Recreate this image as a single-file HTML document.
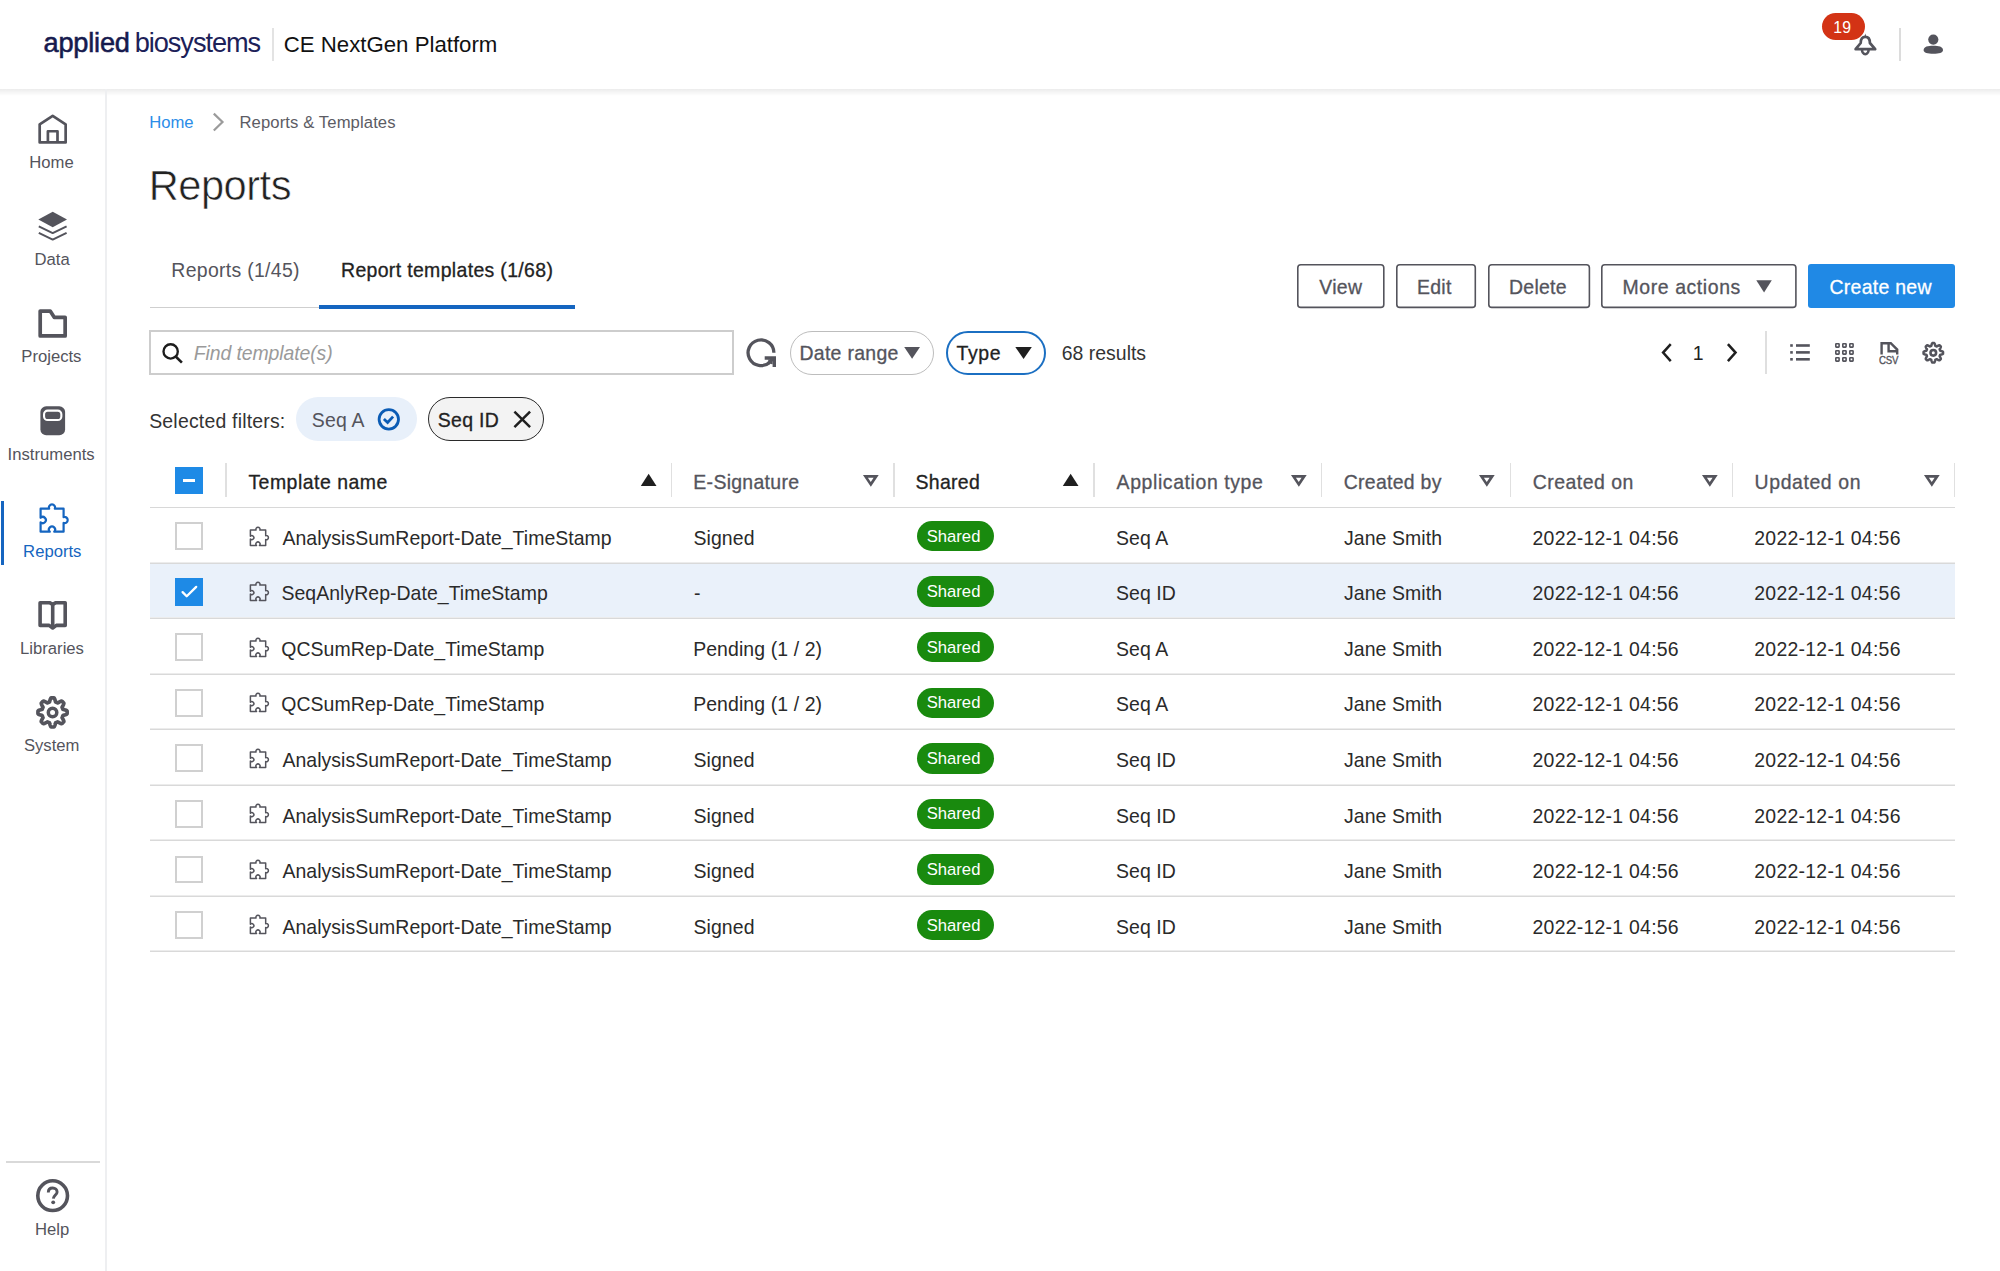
<!DOCTYPE html>
<html><head><meta charset="utf-8"><title>Reports</title>
<style>
html,body{margin:0;padding:0;background:#fff;}
body{width:2000px;height:1271px;position:relative;overflow:hidden;font-family:"Liberation Sans",sans-serif;}
.t{position:absolute;white-space:nowrap;line-height:1;}
.b{position:absolute;box-sizing:border-box;}
svg.b{overflow:visible;}

</style></head><body>

<div class="b" style="left:0.00px;top:89.00px;width:2000.00px;height:7.00px;background:linear-gradient(rgba(0,0,0,0.075),rgba(0,0,0,0));"></div>
<div id="logo1" class="t" style="left:43.51px;top:29px;font-size:27.2px;color:#161a4e;font-weight:400;letter-spacing:-0.2px;-webkit-text-stroke:0.55px #161a4e;">applied</div>
<div id="logo2" class="t" style="left:134.68px;top:29px;font-size:27.2px;color:#1c2158;font-weight:400;letter-spacing:-1.05px;">biosystems</div>
<div class="b" style="left:272.00px;top:28.00px;width:2.00px;height:33.00px;background:#e3e3e3;"></div>
<div id="app" class="t" style="left:283.74px;top:34px;font-size:22.222px;color:#111;font-weight:400;">CE NextGen Platform</div>
<div class="b" style="left:1822.20px;top:12.50px;width:43.10px;height:27.70px;background:#d33315;border-radius:14px;"></div>
<div id="badge" class="t" style="left:1833.35px;top:20px;font-size:15.8px;color:#fff;font-weight:400;">19</div>
<svg class="b" style="left:1852.00px;top:31.00px" width="27" height="27" viewBox="0 0 27 27"><path d="M8.7 12 C8.7 7.6 10.4 5.9 13.3 5.9 C16.2 5.9 17.9 7.6 17.9 12 L23.2 18.2 H3.6 Z" fill="none" stroke="#54545c" stroke-width="2.7" stroke-linejoin="round"/><path d="M12.2 6.2 L13.3 2.6 L14.4 6.2 Z" fill="#54545c"/><path d="M10.0 18.6 A3.3 4.6 0 0 0 16.6 18.6" fill="none" stroke="#54545c" stroke-width="2.6"/></svg>
<div class="b" style="left:1899.00px;top:28.00px;width:1.50px;height:33.00px;background:#dcdcdc;"></div>
<svg class="b" style="left:1923.00px;top:34.00px" width="21" height="21" viewBox="0 0 21 21"><circle cx="10.3" cy="5.6" r="5.1" fill="#54545c"/><path d="M0.6 16.2 C0.6 12.6 5 11.8 10.3 11.8 C15.6 11.8 20 12.6 20 16.2 C20 18.7 16 19.7 10.3 19.7 C4.6 19.7 0.6 18.7 0.6 16.2 Z" fill="#54545c"/></svg>
<div class="b" style="left:105.00px;top:89.00px;width:2.00px;height:1182.00px;background:#eeeff1;"></div>
<svg class="b" style="left:34.00px;top:110.00px" width="38" height="38" viewBox="0 0 38 38"><path d="M5.68 32.45 V14.3 L18.7 5.9 L31.65 14.3 V32.45 Z" fill="none" stroke="#54545c" stroke-width="2.7" stroke-linejoin="round"/><path d="M13.9 32.45 V21.25 H23.5 V32.45" fill="none" stroke="#54545c" stroke-width="2.7" stroke-linejoin="round"/></svg>
<div id="sb_home" class="t" style="left:29.25px;top:155px;font-size:16.667px;color:#54545c;font-weight:400;">Home</div>
<svg class="b" style="left:34.00px;top:206.00px" width="38" height="38" viewBox="0 0 38 38"><path d="M18.7 5.83 L33.0 13.45 L18.7 21.2 L4.33 13.45 Z" fill="#54545c"/><path d="M4.8 20.4 L18.7 27.1 L32.6 20.4" fill="none" stroke="#54545c" stroke-width="2.0" stroke-linejoin="round"/><path d="M4.8 26.9 L18.7 33.6 L32.6 26.9" fill="none" stroke="#54545c" stroke-width="2.0" stroke-linejoin="round"/></svg>
<div id="sb_data" class="t" style="left:34.58px;top:252px;font-size:16.667px;color:#54545c;font-weight:400;">Data</div>
<svg class="b" style="left:34.00px;top:304.00px" width="38" height="38" viewBox="0 0 38 38"><path d="M6.2 7.1 H16.2 L20.2 13.3 H31.15 V31.9 H6.2 Z" fill="none" stroke="#54545c" stroke-width="3.7" stroke-linejoin="round"/></svg>
<div id="sb_proj" class="t" style="left:21.28px;top:349px;font-size:16.667px;color:#54545c;font-weight:400;">Projects</div>
<svg class="b" style="left:34.00px;top:402.00px" width="38" height="38" viewBox="0 0 38 38"><rect x="6.4" y="4.2" width="24.7" height="29" rx="5.8" fill="#54545c"/><rect x="10.05" y="8.65" width="17.3" height="9.4" rx="3.6" fill="none" stroke="#fff" stroke-width="2.1"/></svg>
<div id="sb_inst" class="t" style="left:7.61px;top:447px;font-size:16.667px;color:#54545c;font-weight:400;">Instruments</div>
<div class="b" style="left:0.80px;top:501.30px;width:2.80px;height:63.70px;background:#1565c0;"></div>
<svg class="b" style="left:34.00px;top:498.00px" width="40" height="40" viewBox="0 0 40 40"><path d="M6.6 10.7 H15.17 A3.07 3.07 0 1 1 20.83 10.7 H29.6 V19.14 A3.07 3.07 0 1 1 29.6 24.92 V33.7 H20.21 A3.07 3.07 0 1 0 15.79 33.7 H6.6 V24.24 A3.07 3.07 0 1 0 6.6 19.82 Z" fill="none" stroke="#1565c0" stroke-width="2.2" stroke-linejoin="round"/></svg>
<div id="sb_rep" class="t" style="left:23.12px;top:544px;font-size:16.667px;color:#1565c0;font-weight:400;">Reports</div>
<svg class="b" style="left:34.00px;top:596.00px" width="38" height="38" viewBox="0 0 38 38"><path d="M6.1 6.7 H15.5 L18.7 8.4 L21.9 6.7 H31.2 V29.4 H22.3 L18.7 32 L15.1 29.4 H6.1 Z" fill="none" stroke="#54545c" stroke-width="3.6" stroke-linejoin="round"/><path d="M18.7 8.4 V31" stroke="#54545c" stroke-width="3.6"/></svg>
<div id="sb_lib" class="t" style="left:20.06px;top:641px;font-size:16.667px;color:#54545c;font-weight:400;">Libraries</div>
<svg class="b" style="left:36.00px;top:696.00px" width="34" height="34" viewBox="0 0 34 34"><path d="M16.55 1.80 L16.84 1.80 L17.12 1.81 L17.41 1.83 L17.70 1.85 L17.98 1.87 L18.24 2.12 L18.47 2.54 L18.67 2.99 L18.86 3.46 L19.03 3.94 L19.18 4.43 L19.31 4.91 L19.43 5.36 L19.54 5.79 L19.69 6.07 L19.89 6.13 L20.09 6.20 L20.29 6.27 L20.49 6.34 L20.68 6.42 L20.88 6.51 L21.07 6.59 L21.26 6.68 L21.45 6.78 L21.64 6.88 L21.94 6.78 L22.32 6.56 L22.73 6.32 L23.16 6.08 L23.61 5.84 L24.07 5.62 L24.53 5.41 L25.00 5.24 L25.45 5.11 L25.81 5.11 L26.03 5.30 L26.25 5.49 L26.46 5.68 L26.67 5.88 L26.87 6.08 L27.07 6.28 L27.27 6.49 L27.46 6.70 L27.65 6.92 L27.84 7.14 L27.84 7.50 L27.71 7.95 L27.54 8.42 L27.33 8.88 L27.11 9.34 L26.87 9.79 L26.63 10.22 L26.39 10.63 L26.17 11.01 L26.07 11.31 L26.17 11.50 L26.27 11.69 L26.36 11.88 L26.44 12.07 L26.53 12.27 L26.61 12.46 L26.68 12.66 L26.75 12.86 L26.82 13.06 L26.88 13.26 L27.16 13.41 L27.59 13.52 L28.04 13.64 L28.52 13.77 L29.01 13.92 L29.49 14.09 L29.96 14.28 L30.41 14.48 L30.83 14.71 L31.08 14.97 L31.10 15.25 L31.12 15.54 L31.14 15.83 L31.15 16.11 L31.15 16.40 L31.15 16.69 L31.14 16.97 L31.12 17.26 L31.10 17.55 L31.08 17.83 L30.83 18.09 L30.41 18.32 L29.96 18.52 L29.49 18.71 L29.01 18.88 L28.52 19.03 L28.04 19.16 L27.59 19.28 L27.16 19.39 L26.88 19.54 L26.82 19.74 L26.75 19.94 L26.68 20.14 L26.61 20.34 L26.53 20.53 L26.44 20.73 L26.36 20.92 L26.27 21.11 L26.17 21.30 L26.07 21.49 L26.17 21.79 L26.39 22.17 L26.63 22.58 L26.87 23.01 L27.11 23.46 L27.33 23.92 L27.54 24.38 L27.71 24.85 L27.84 25.30 L27.84 25.66 L27.65 25.88 L27.46 26.10 L27.27 26.31 L27.07 26.52 L26.87 26.72 L26.67 26.92 L26.46 27.12 L26.25 27.31 L26.03 27.50 L25.81 27.69 L25.45 27.69 L25.00 27.56 L24.53 27.39 L24.07 27.18 L23.61 26.96 L23.16 26.72 L22.73 26.48 L22.32 26.24 L21.94 26.02 L21.64 25.92 L21.45 26.02 L21.26 26.12 L21.07 26.21 L20.88 26.29 L20.68 26.38 L20.49 26.46 L20.29 26.53 L20.09 26.60 L19.89 26.67 L19.69 26.73 L19.54 27.01 L19.43 27.44 L19.31 27.89 L19.18 28.37 L19.03 28.86 L18.86 29.34 L18.67 29.81 L18.47 30.26 L18.24 30.68 L17.98 30.93 L17.70 30.95 L17.41 30.97 L17.12 30.99 L16.84 31.00 L16.55 31.00 L16.26 31.00 L15.98 30.99 L15.69 30.97 L15.40 30.95 L15.12 30.93 L14.86 30.68 L14.63 30.26 L14.43 29.81 L14.24 29.34 L14.07 28.86 L13.92 28.37 L13.79 27.89 L13.67 27.44 L13.56 27.01 L13.41 26.73 L13.21 26.67 L13.01 26.60 L12.81 26.53 L12.61 26.46 L12.42 26.38 L12.22 26.29 L12.03 26.21 L11.84 26.12 L11.65 26.02 L11.46 25.92 L11.16 26.02 L10.78 26.24 L10.37 26.48 L9.94 26.72 L9.49 26.96 L9.03 27.18 L8.57 27.39 L8.10 27.56 L7.65 27.69 L7.29 27.69 L7.07 27.50 L6.85 27.31 L6.64 27.12 L6.43 26.92 L6.23 26.72 L6.03 26.52 L5.83 26.31 L5.64 26.10 L5.45 25.88 L5.26 25.66 L5.26 25.30 L5.39 24.85 L5.56 24.38 L5.77 23.92 L5.99 23.46 L6.23 23.01 L6.47 22.58 L6.71 22.17 L6.93 21.79 L7.03 21.49 L6.93 21.30 L6.83 21.11 L6.74 20.92 L6.66 20.73 L6.57 20.53 L6.49 20.34 L6.42 20.14 L6.35 19.94 L6.28 19.74 L6.22 19.54 L5.94 19.39 L5.51 19.28 L5.06 19.16 L4.58 19.03 L4.09 18.88 L3.61 18.71 L3.14 18.52 L2.69 18.32 L2.27 18.09 L2.02 17.83 L2.00 17.55 L1.98 17.26 L1.96 16.97 L1.95 16.69 L1.95 16.40 L1.95 16.11 L1.96 15.83 L1.98 15.54 L2.00 15.25 L2.02 14.97 L2.27 14.71 L2.69 14.48 L3.14 14.28 L3.61 14.09 L4.09 13.92 L4.58 13.77 L5.06 13.64 L5.51 13.52 L5.94 13.41 L6.22 13.26 L6.28 13.06 L6.35 12.86 L6.42 12.66 L6.49 12.46 L6.57 12.27 L6.66 12.07 L6.74 11.88 L6.83 11.69 L6.93 11.50 L7.03 11.31 L6.93 11.01 L6.71 10.63 L6.47 10.22 L6.23 9.79 L5.99 9.34 L5.77 8.88 L5.56 8.42 L5.39 7.95 L5.26 7.50 L5.26 7.14 L5.45 6.92 L5.64 6.70 L5.83 6.49 L6.03 6.28 L6.23 6.08 L6.43 5.88 L6.64 5.68 L6.85 5.49 L7.07 5.30 L7.29 5.11 L7.65 5.11 L8.10 5.24 L8.57 5.41 L9.03 5.62 L9.49 5.84 L9.94 6.08 L10.37 6.32 L10.78 6.56 L11.16 6.78 L11.46 6.88 L11.65 6.78 L11.84 6.68 L12.03 6.59 L12.22 6.51 L12.42 6.42 L12.61 6.34 L12.81 6.27 L13.01 6.20 L13.21 6.13 L13.41 6.07 L13.56 5.79 L13.67 5.36 L13.79 4.91 L13.92 4.43 L14.07 3.94 L14.24 3.46 L14.43 2.99 L14.63 2.54 L14.86 2.12 L15.12 1.87 L15.40 1.85 L15.69 1.83 L15.98 1.81 L16.26 1.80 Z" fill="none" stroke="#54545c" stroke-width="3.7" stroke-linejoin="round"/><circle cx="16.55" cy="16.4" r="4.25" fill="none" stroke="#54545c" stroke-width="3.5"/></svg>
<div id="sb_sys" class="t" style="left:23.92px;top:738px;font-size:16.667px;color:#54545c;font-weight:400;">System</div>
<div class="b" style="left:6.00px;top:1161.00px;width:94.00px;height:1.80px;background:#d9d9d9;"></div>
<svg class="b" style="left:36.00px;top:1179.40px" width="34" height="34" viewBox="0 0 34 34"><circle cx="16.65" cy="16.65" r="14.85" fill="none" stroke="#54545c" stroke-width="3.6"/><path d="M12.3 13.4 C12.3 10.5 14.2 9.0 16.7 9.0 C19.3 9.0 21.1 10.7 21.1 12.9 C21.1 15.7 17.6 16.3 17.3 19.7" fill="none" stroke="#54545c" stroke-width="2.9"/><circle cx="17.2" cy="23.3" r="1.9" fill="#54545c"/></svg>
<div id="sb_help" class="t" style="left:34.92px;top:1222px;font-size:16.667px;color:#54545c;font-weight:400;">Help</div>
<div id="bc_home" class="t" style="left:149.20px;top:115px;font-size:16.667px;color:#2b8de8;font-weight:400;">Home</div>
<svg class="b" style="left:206.00px;top:108.00px" width="24" height="26" viewBox="0 0 24 26"><path d="M7.8 5.6 L16.5 14.05 L7.8 22.5" fill="none" stroke="#9b9b9b" stroke-width="2.2"/></svg>
<div id="bc_rt" class="t" style="left:239.46px;top:115px;font-size:16.667px;color:#5c5c64;font-weight:400;letter-spacing:0.1px;">Reports &amp; Templates</div>
<div id="title" class="t" style="left:148.63px;top:165px;font-size:41.667px;color:#222;font-weight:400;letter-spacing:-0.5px;-webkit-text-stroke:0.6px #fff;">Reports</div>
<div id="tab1" class="t" style="left:171.37px;top:261px;font-size:19.444px;color:#54545c;font-weight:400;letter-spacing:0.3px;">Reports (1/45)</div>
<div id="tab2" class="t" style="left:341.01px;top:261px;font-size:19.444px;color:#222;font-weight:400;-webkit-text-stroke:0.3px #222;letter-spacing:0.35px;">Report templates (1/68)</div>
<div class="b" style="left:150.00px;top:306.50px;width:170.00px;height:1.50px;background:#cfcfcf;"></div>
<div class="b" style="left:319.40px;top:305.00px;width:255.20px;height:3.50px;background:#1565c0;"></div>
<svg class="b" style="left:1297.2px;top:264px" width="87.60" height="44.2"><rect x="0.8" y="0.8" width="86.00" height="42.6" rx="3" fill="#fff" stroke="#54545c" stroke-width="1.6"/></svg>
<div id="b_view" class="t" style="left:1319.27px;top:278px;font-size:19.444px;color:#54545c;font-weight:400;-webkit-text-stroke:0.3px #54545c;letter-spacing:0.3px;letter-spacing:0.3px;">View</div>
<svg class="b" style="left:1395.9px;top:264px" width="80.10" height="44.2"><rect x="0.8" y="0.8" width="78.50" height="42.6" rx="3" fill="#fff" stroke="#54545c" stroke-width="1.6"/></svg>
<div id="b_edit" class="t" style="left:1416.95px;top:278px;font-size:19.444px;color:#54545c;font-weight:400;-webkit-text-stroke:0.3px #54545c;letter-spacing:0.3px;letter-spacing:0.3px;">Edit</div>
<svg class="b" style="left:1487.6px;top:264px" width="102.20" height="44.2"><rect x="0.8" y="0.8" width="100.60" height="42.6" rx="3" fill="#fff" stroke="#54545c" stroke-width="1.6"/></svg>
<div id="b_del" class="t" style="left:1508.95px;top:278px;font-size:19.444px;color:#54545c;font-weight:400;-webkit-text-stroke:0.3px #54545c;letter-spacing:0.3px;letter-spacing:0.3px;">Delete</div>
<svg class="b" style="left:1601.4px;top:264px" width="195.70" height="44.2"><rect x="0.8" y="0.8" width="194.10" height="42.6" rx="3" fill="#fff" stroke="#54545c" stroke-width="1.6"/></svg>
<div id="b_more" class="t" style="left:1622.46px;top:278px;font-size:19.444px;color:#54545c;font-weight:400;-webkit-text-stroke:0.3px #54545c;letter-spacing:0.3px;letter-spacing:0.6px;">More actions</div>
<svg class="b" style="left:1752.00px;top:276.00px" width="24" height="20" viewBox="0 0 24 20"><path d="M4.3 4.3 H19.8 L12.05 16.4 Z" fill="#54545c"/></svg>
<div class="b" style="left:1808.10px;top:263.90px;width:147.10px;height:44.30px;background:#2089e5;border-radius:3px;"></div>
<div id="b_create" class="t" style="left:1829.43px;top:278px;font-size:19.444px;color:#fff;font-weight:400;-webkit-text-stroke:0.3px #fff;letter-spacing:0.3px;">Create new</div>
<div class="b" style="left:149.40px;top:330.00px;width:584.40px;height:45.40px;border:2px solid #cdcdcd;background:#fff;"></div>
<svg class="b" style="left:155.00px;top:336.00px" width="35" height="34" viewBox="0 0 35 34"><circle cx="15.65" cy="15.4" r="7.15" fill="none" stroke="#1c1c1c" stroke-width="2.35"/><path d="M20.7 20.5 L26.9 26.6" stroke="#1c1c1c" stroke-width="2.6"/></svg>
<div id="ph" class="t" style="left:193.77px;top:344px;font-size:19.444px;color:#9a9a9a;font-weight:400;font-style:italic;letter-spacing:-0.1px;">Find template(s)</div>
<svg class="b" style="left:742.00px;top:334.00px" width="40" height="38" viewBox="0 0 40 38"><path d="M31.9 18.8 A12.9 12.9 0 1 0 27.6 28.4" fill="none" stroke="#54545c" stroke-width="3.3"/><path d="M22.7 24.0 H32.3 V33.0" fill="none" stroke="#54545c" stroke-width="3.4" stroke-linejoin="miter"/><path d="M25.6 25.5 L30.6 25.5 L30.6 30.3 L28.6 30.0 Z" fill="#54545c"/><path d="M26.3 29.4 L31.0 24.6" stroke="#54545c" stroke-width="3.2"/></svg>
<div class="b" style="left:789.50px;top:331.00px;width:144.50px;height:43.60px;border:1.5px solid #bdbdbd;border-radius:22px;background:#fff;"></div>
<div id="dr" class="t" style="left:799.46px;top:344px;font-size:19.444px;color:#54545c;font-weight:400;-webkit-text-stroke:0.3px #54545c;letter-spacing:0.3px;">Date range</div>
<svg class="b" style="left:900.00px;top:342.00px" width="24" height="20" viewBox="0 0 24 20"><path d="M4.2 5 H20 L12.1 16.8 Z" fill="#54545c"/></svg>
<div class="b" style="left:945.90px;top:330.90px;width:99.70px;height:43.70px;border:2px solid #1b6fc2;border-radius:22px;background:#fff;"></div>
<div id="type" class="t" style="left:956.40px;top:344px;font-size:19.444px;color:#222;font-weight:400;-webkit-text-stroke:0.3px #222;letter-spacing:0.3px;letter-spacing:0.7px;">Type</div>
<svg class="b" style="left:1011.00px;top:342.00px" width="24" height="20" viewBox="0 0 24 20"><path d="M4.3 5 H20.8 L12.55 17.1 Z" fill="#1f1f1f"/></svg>
<div id="res" class="t" style="left:1061.82px;top:344px;font-size:19.444px;color:#333;font-weight:400;">68 results</div>
<svg class="b" style="left:1655.00px;top:338.00px" width="90" height="30" viewBox="0 0 90 30"><path d="M15.75 6.1 L8.1 14.6 L15.75 23.2" fill="none" stroke="#1f1f1f" stroke-width="2.5"/><path d="M72.9 6.1 L80.55 14.6 L72.9 23.2" fill="none" stroke="#1f1f1f" stroke-width="2.5"/></svg>
<div id="pg1" class="t" style="left:1692.70px;top:344px;font-size:19.444px;color:#222;font-weight:400;">1</div>
<div class="b" style="left:1765.20px;top:330.90px;width:1.60px;height:43.50px;background:#dfdfdf;"></div>
<svg class="b" style="left:1790.00px;top:344.20px" width="21" height="18" viewBox="0 0 21 18"><rect x="0.2" y="0.2" width="2.6" height="2.6" fill="#54545c"/><rect x="6" y="0.2" width="13.8" height="2.6" fill="#54545c"/><rect x="0.2" y="7.1" width="2.6" height="2.6" fill="#54545c"/><rect x="6" y="7.1" width="13.8" height="2.6" fill="#54545c"/><rect x="0.2" y="14.0" width="2.6" height="2.6" fill="#54545c"/><rect x="6" y="14.0" width="13.8" height="2.6" fill="#54545c"/></svg>
<svg class="b" style="left:1835.00px;top:343.20px" width="21" height="21" viewBox="0 0 21 21"><rect x="0.8" y="0.8" width="3.3" height="3.3" rx="0.5" fill="none" stroke="#54545c" stroke-width="1.6"/><rect x="7.8" y="0.8" width="3.3" height="3.3" rx="0.5" fill="none" stroke="#54545c" stroke-width="1.6"/><rect x="14.8" y="0.8" width="3.3" height="3.3" rx="0.5" fill="none" stroke="#54545c" stroke-width="1.6"/><rect x="0.8" y="7.8" width="3.3" height="3.3" rx="0.5" fill="none" stroke="#54545c" stroke-width="1.6"/><rect x="7.8" y="7.8" width="3.3" height="3.3" rx="0.5" fill="none" stroke="#54545c" stroke-width="1.6"/><rect x="14.8" y="7.8" width="3.3" height="3.3" rx="0.5" fill="none" stroke="#54545c" stroke-width="1.6"/><rect x="0.8" y="14.8" width="3.3" height="3.3" rx="0.5" fill="none" stroke="#54545c" stroke-width="1.6"/><rect x="7.8" y="14.8" width="3.3" height="3.3" rx="0.5" fill="none" stroke="#54545c" stroke-width="1.6"/><rect x="14.8" y="14.8" width="3.3" height="3.3" rx="0.5" fill="none" stroke="#54545c" stroke-width="1.6"/></svg>
<svg class="b" style="left:1872.00px;top:336.00px" width="30" height="20" viewBox="0 0 30 20"><path d="M9.6 18.6 V7.2 H18.8 L25.2 13.6 V18.6" fill="none" stroke="#54545c" stroke-width="2.4" stroke-linejoin="miter"/><path d="M16.6 7.5 V15.2 H25" fill="none" stroke="#54545c" stroke-width="2.4"/></svg>
<div id="csv" class="t" style="left:1879.13px;top:355px;font-size:11.5px;color:#54545c;font-weight:400;letter-spacing:-0.3px;-webkit-text-stroke:0.35px #54545c;transform:scaleX(0.84);transform-origin:0 0;">CSV</div>
<svg class="b" style="left:1921.00px;top:341.00px" width="25" height="25" viewBox="0 0 25 25"><path d="M12.30 2.05 L12.49 2.05 L12.68 2.06 L12.87 2.07 L13.06 2.08 L13.26 2.10 L13.43 2.27 L13.58 2.54 L13.72 2.85 L13.84 3.16 L13.95 3.49 L14.05 3.81 L14.14 4.13 L14.22 4.44 L14.30 4.73 L14.39 4.91 L14.52 4.95 L14.66 5.00 L14.79 5.05 L14.92 5.10 L15.06 5.15 L15.19 5.20 L15.31 5.26 L15.44 5.32 L15.57 5.38 L15.69 5.45 L15.89 5.39 L16.15 5.24 L16.42 5.08 L16.71 4.91 L17.01 4.75 L17.32 4.60 L17.63 4.47 L17.94 4.35 L18.24 4.26 L18.49 4.26 L18.63 4.39 L18.78 4.51 L18.92 4.64 L19.06 4.77 L19.19 4.91 L19.33 5.04 L19.46 5.18 L19.59 5.32 L19.71 5.47 L19.84 5.61 L19.84 5.86 L19.75 6.16 L19.63 6.47 L19.50 6.78 L19.35 7.09 L19.19 7.39 L19.02 7.68 L18.86 7.95 L18.71 8.21 L18.65 8.41 L18.72 8.53 L18.78 8.66 L18.84 8.79 L18.90 8.91 L18.95 9.04 L19.00 9.18 L19.05 9.31 L19.10 9.44 L19.15 9.58 L19.19 9.71 L19.37 9.80 L19.66 9.88 L19.97 9.96 L20.29 10.05 L20.61 10.15 L20.94 10.26 L21.25 10.38 L21.56 10.52 L21.83 10.67 L22.00 10.84 L22.02 11.04 L22.03 11.23 L22.04 11.42 L22.05 11.61 L22.05 11.80 L22.05 11.99 L22.04 12.18 L22.03 12.37 L22.02 12.56 L22.00 12.76 L21.83 12.93 L21.56 13.08 L21.25 13.22 L20.94 13.34 L20.61 13.45 L20.29 13.55 L19.97 13.64 L19.66 13.72 L19.37 13.80 L19.19 13.89 L19.15 14.02 L19.10 14.16 L19.05 14.29 L19.00 14.42 L18.95 14.56 L18.90 14.69 L18.84 14.81 L18.78 14.94 L18.72 15.07 L18.65 15.19 L18.71 15.39 L18.86 15.65 L19.02 15.92 L19.19 16.21 L19.35 16.51 L19.50 16.82 L19.63 17.13 L19.75 17.44 L19.84 17.74 L19.84 17.99 L19.71 18.13 L19.59 18.28 L19.46 18.42 L19.33 18.56 L19.19 18.69 L19.06 18.83 L18.92 18.96 L18.78 19.09 L18.63 19.21 L18.49 19.34 L18.24 19.34 L17.94 19.25 L17.63 19.13 L17.32 19.00 L17.01 18.85 L16.71 18.69 L16.42 18.52 L16.15 18.36 L15.89 18.21 L15.69 18.15 L15.57 18.22 L15.44 18.28 L15.31 18.34 L15.19 18.40 L15.06 18.45 L14.92 18.50 L14.79 18.55 L14.66 18.60 L14.52 18.65 L14.39 18.69 L14.30 18.87 L14.22 19.16 L14.14 19.47 L14.05 19.79 L13.95 20.11 L13.84 20.44 L13.72 20.75 L13.58 21.06 L13.43 21.33 L13.26 21.50 L13.06 21.52 L12.87 21.53 L12.68 21.54 L12.49 21.55 L12.30 21.55 L12.11 21.55 L11.92 21.54 L11.73 21.53 L11.54 21.52 L11.34 21.50 L11.17 21.33 L11.02 21.06 L10.88 20.75 L10.76 20.44 L10.65 20.11 L10.55 19.79 L10.46 19.47 L10.38 19.16 L10.30 18.87 L10.21 18.69 L10.08 18.65 L9.94 18.60 L9.81 18.55 L9.68 18.50 L9.54 18.45 L9.41 18.40 L9.29 18.34 L9.16 18.28 L9.03 18.22 L8.91 18.15 L8.71 18.21 L8.45 18.36 L8.18 18.52 L7.89 18.69 L7.59 18.85 L7.28 19.00 L6.97 19.13 L6.66 19.25 L6.36 19.34 L6.11 19.34 L5.97 19.21 L5.82 19.09 L5.68 18.96 L5.54 18.83 L5.41 18.69 L5.27 18.56 L5.14 18.42 L5.01 18.28 L4.89 18.13 L4.76 17.99 L4.76 17.74 L4.85 17.44 L4.97 17.13 L5.10 16.82 L5.25 16.51 L5.41 16.21 L5.58 15.92 L5.74 15.65 L5.89 15.39 L5.95 15.19 L5.88 15.07 L5.82 14.94 L5.76 14.81 L5.70 14.69 L5.65 14.56 L5.60 14.42 L5.55 14.29 L5.50 14.16 L5.45 14.02 L5.41 13.89 L5.23 13.80 L4.94 13.72 L4.63 13.64 L4.31 13.55 L3.99 13.45 L3.66 13.34 L3.35 13.22 L3.04 13.08 L2.77 12.93 L2.60 12.76 L2.58 12.56 L2.57 12.37 L2.56 12.18 L2.55 11.99 L2.55 11.80 L2.55 11.61 L2.56 11.42 L2.57 11.23 L2.58 11.04 L2.60 10.84 L2.77 10.67 L3.04 10.52 L3.35 10.38 L3.66 10.26 L3.99 10.15 L4.31 10.05 L4.63 9.96 L4.94 9.88 L5.23 9.80 L5.41 9.71 L5.45 9.58 L5.50 9.44 L5.55 9.31 L5.60 9.18 L5.65 9.04 L5.70 8.91 L5.76 8.79 L5.82 8.66 L5.88 8.53 L5.95 8.41 L5.89 8.21 L5.74 7.95 L5.58 7.68 L5.41 7.39 L5.25 7.09 L5.10 6.78 L4.97 6.47 L4.85 6.16 L4.76 5.86 L4.76 5.61 L4.89 5.47 L5.01 5.32 L5.14 5.18 L5.27 5.04 L5.41 4.91 L5.54 4.77 L5.68 4.64 L5.82 4.51 L5.97 4.39 L6.11 4.26 L6.36 4.26 L6.66 4.35 L6.97 4.47 L7.28 4.60 L7.59 4.75 L7.89 4.91 L8.18 5.08 L8.45 5.24 L8.71 5.39 L8.91 5.45 L9.03 5.38 L9.16 5.32 L9.29 5.26 L9.41 5.20 L9.54 5.15 L9.68 5.10 L9.81 5.05 L9.94 5.00 L10.08 4.95 L10.21 4.91 L10.30 4.73 L10.38 4.44 L10.46 4.13 L10.55 3.81 L10.65 3.49 L10.76 3.16 L10.88 2.85 L11.02 2.54 L11.17 2.27 L11.34 2.10 L11.54 2.08 L11.73 2.07 L11.92 2.06 L12.11 2.05 Z" fill="none" stroke="#54545c" stroke-width="2.5" stroke-linejoin="round"/><circle cx="12.3" cy="11.8" r="2.8" fill="none" stroke="#54545c" stroke-width="2.6"/></svg>
<div id="sf" class="t" style="left:149.19px;top:412px;font-size:19.444px;color:#333;font-weight:400;letter-spacing:0.2px;">Selected filters:</div>
<div class="b" style="left:295.80px;top:396.90px;width:121.00px;height:44.50px;background:#e8f0fa;border-radius:23px;"></div>
<div id="chip1" class="t" style="left:311.86px;top:411px;font-size:19.444px;color:#54545c;font-weight:400;letter-spacing:0.2px;">Seq A</div>
<svg class="b" style="left:370.00px;top:400.00px" width="40" height="40" viewBox="0 0 40 40"><circle cx="18.8" cy="19.35" r="9.7" fill="none" stroke="#0b5cb5" stroke-width="2.8"/><path d="M13.9 18.9 L17.6 22.4 L23.1 16.6" fill="none" stroke="#0b5cb5" stroke-width="2.8"/></svg>
<div class="b" style="left:428.10px;top:396.90px;width:116.10px;height:44.50px;border:1.5px solid #2a2a2a;border-radius:23px;background:#f3f3f3;"></div>
<div id="chip2" class="t" style="left:437.77px;top:411px;font-size:19.444px;color:#222;font-weight:400;-webkit-text-stroke:0.3px #222;letter-spacing:0.3px;">Seq ID</div>
<svg class="b" style="left:505.00px;top:400.00px" width="40" height="40" viewBox="0 0 40 40"><path d="M9.4 11.6 L25.1 27.1 M25.1 11.6 L9.4 27.1" stroke="#1f1f1f" stroke-width="2.5"/></svg>
<div class="b" style="left:150.00px;top:506.60px;width:1805.00px;height:1.70px;background:#d8d8d8;"></div>
<div class="b" style="left:225.20px;top:463.00px;width:1.60px;height:33.50px;background:#e0e0e0;"></div>
<div class="b" style="left:670.50px;top:463.00px;width:1.60px;height:33.50px;background:#e0e0e0;"></div>
<div class="b" style="left:893.20px;top:463.00px;width:1.60px;height:33.50px;background:#e0e0e0;"></div>
<div class="b" style="left:1093.40px;top:463.00px;width:1.60px;height:33.50px;background:#e0e0e0;"></div>
<div class="b" style="left:1320.50px;top:463.00px;width:1.60px;height:33.50px;background:#e0e0e0;"></div>
<div class="b" style="left:1509.80px;top:463.00px;width:1.60px;height:33.50px;background:#e0e0e0;"></div>
<div class="b" style="left:1731.80px;top:463.00px;width:1.60px;height:33.50px;background:#e0e0e0;"></div>
<div class="b" style="left:1953.80px;top:463.00px;width:1.60px;height:33.50px;background:#e0e0e0;"></div>
<div class="b" style="left:175.04px;top:466.60px;width:27.86px;height:27.90px;background:#1e8ae6;"></div>
<div class="b" style="left:183.06px;top:479.00px;width:11.64px;height:3.00px;background:#fff;"></div>
<div id="h_name" class="t" style="left:248.40px;top:473px;font-size:19.444px;color:#222;font-weight:400;-webkit-text-stroke:0.3px #222;letter-spacing:0.3px;letter-spacing:0.5px;">Template name</div>
<div id="h_esig" class="t" style="left:693.35px;top:473px;font-size:19.444px;color:#54545c;font-weight:400;-webkit-text-stroke:0.3px #54545c;letter-spacing:0.3px;">E-Signature</div>
<div id="h_shared" class="t" style="left:915.54px;top:473px;font-size:19.444px;color:#222;font-weight:400;-webkit-text-stroke:0.3px #222;letter-spacing:0.3px;">Shared</div>
<div id="h_app" class="t" style="left:1116.61px;top:473px;font-size:19.444px;color:#54545c;font-weight:400;-webkit-text-stroke:0.3px #54545c;letter-spacing:0.3px;letter-spacing:0.6px;">Application type</div>
<div id="h_cby" class="t" style="left:1343.68px;top:473px;font-size:19.444px;color:#54545c;font-weight:400;-webkit-text-stroke:0.3px #54545c;letter-spacing:0.3px;">Created by</div>
<div id="h_con" class="t" style="left:1532.74px;top:473px;font-size:19.444px;color:#54545c;font-weight:400;-webkit-text-stroke:0.3px #54545c;letter-spacing:0.3px;letter-spacing:0.5px;">Created on</div>
<div id="h_uon" class="t" style="left:1754.60px;top:473px;font-size:19.444px;color:#54545c;font-weight:400;-webkit-text-stroke:0.3px #54545c;letter-spacing:0.3px;letter-spacing:0.6px;">Updated on</div>
<svg class="b" style="left:636.00px;top:468.00px" width="24" height="24" viewBox="0 0 24 24"><path d="M4.8 17.94 H20.5 L12.65 5.85 Z" fill="#1f1f1f"/></svg>
<svg class="b" style="left:859.00px;top:468.00px" width="24" height="24" viewBox="0 0 24 24"><path d="M3.97 6.9 H19.7 L11.84 18.7 Z M8.9 9.8 L11.75 14.07 L14.6 9.8 Z" fill="#54545c" fill-rule="evenodd"/></svg>
<svg class="b" style="left:1058.25px;top:468.00px" width="24" height="24" viewBox="0 0 24 24"><path d="M4.8 17.94 H20.5 L12.65 5.85 Z" fill="#1f1f1f"/></svg>
<svg class="b" style="left:1286.55px;top:468.00px" width="24" height="24" viewBox="0 0 24 24"><path d="M3.97 6.9 H19.7 L11.84 18.7 Z M8.9 9.8 L11.75 14.07 L14.6 9.8 Z" fill="#54545c" fill-rule="evenodd"/></svg>
<svg class="b" style="left:1475.30px;top:468.00px" width="24" height="24" viewBox="0 0 24 24"><path d="M3.97 6.9 H19.7 L11.84 18.7 Z M8.9 9.8 L11.75 14.07 L14.6 9.8 Z" fill="#54545c" fill-rule="evenodd"/></svg>
<svg class="b" style="left:1697.80px;top:468.00px" width="24" height="24" viewBox="0 0 24 24"><path d="M3.97 6.9 H19.7 L11.84 18.7 Z M8.9 9.8 L11.75 14.07 L14.6 9.8 Z" fill="#54545c" fill-rule="evenodd"/></svg>
<svg class="b" style="left:1919.80px;top:468.00px" width="24" height="24" viewBox="0 0 24 24"><path d="M3.97 6.9 H19.7 L11.84 18.7 Z M8.9 9.8 L11.75 14.07 L14.6 9.8 Z" fill="#54545c" fill-rule="evenodd"/></svg>
<div class="b" style="left:150.00px;top:562.00px;width:1805.00px;height:2.00px;background:linear-gradient(#ececec 50%, #d9d9d9 50%);"></div>
<div class="b" style="left:175.04px;top:522.20px;width:27.86px;height:27.90px;border:2px solid #d0d0d0;background:#fff;"></div>
<svg class="b" style="left:246.39px;top:522.52px" width="28" height="28" viewBox="0 0 42.105 42.105"><path d="M6.6 10.7 H15.17 A3.07 3.07 0 1 1 20.83 10.7 H29.6 V19.14 A3.07 3.07 0 1 1 29.6 24.92 V33.7 H20.21 A3.07 3.07 0 1 0 15.79 33.7 H6.6 V24.24 A3.07 3.07 0 1 0 6.6 19.82 Z" fill="none" stroke="#54545c" stroke-width="2.256" stroke-linejoin="round"/></svg>
<div id="r0_name" class="t" style="left:282.44px;top:529px;font-size:19.444px;color:#2a2a2a;font-weight:400;letter-spacing:0.05px;">AnalysisSumReport-Date_TimeStamp</div>
<div id="r0_esig" class="t" style="left:693.46px;top:529px;font-size:19.444px;color:#2a2a2a;font-weight:400;letter-spacing:0.1px;">Signed</div>
<div class="b" style="left:916.50px;top:520.90px;width:77.90px;height:30.40px;background:#198a0e;border-radius:16px;"></div>
<div id="r0_badge" class="t" style="left:926.70px;top:529px;font-size:16.667px;color:#fff;font-weight:400;">Shared</div>
<div id="r0_app" class="t" style="left:1115.92px;top:529px;font-size:19.444px;color:#2a2a2a;font-weight:400;letter-spacing:0.1px;">Seq A</div>
<div id="r0_cby" class="t" style="left:1343.95px;top:529px;font-size:19.444px;color:#2a2a2a;font-weight:400;letter-spacing:0.1px;">Jane Smith</div>
<div id="r0_con" class="t" style="left:1532.53px;top:529px;font-size:19.444px;color:#2a2a2a;font-weight:400;letter-spacing:0.25px;">2022-12-1 04:56</div>
<div id="r0_uon" class="t" style="left:1754.30px;top:529px;font-size:19.444px;color:#2a2a2a;font-weight:400;letter-spacing:0.25px;">2022-12-1 04:56</div>
<div class="b" style="left:150.00px;top:564.00px;width:1805.00px;height:54.00px;background:#eaf1fa;"></div>
<div class="b" style="left:150.00px;top:617.00px;width:1805.00px;height:2.00px;background:linear-gradient(#ececec 50%, #d9d9d9 50%);"></div>
<div class="b" style="left:175.04px;top:577.75px;width:27.86px;height:27.90px;background:#1e8ae6;"></div>
<svg class="b" style="left:175.00px;top:577.95px" width="28" height="28" viewBox="0 0 28 28"><path d="M7.6 14.1 L11.7 18.3 L21.2 8.9" fill="none" stroke="#fff" stroke-width="2.3" stroke-linecap="round" stroke-linejoin="round"/></svg>
<svg class="b" style="left:246.39px;top:578.07px" width="28" height="28" viewBox="0 0 42.105 42.105"><path d="M6.6 10.7 H15.17 A3.07 3.07 0 1 1 20.83 10.7 H29.6 V19.14 A3.07 3.07 0 1 1 29.6 24.92 V33.7 H20.21 A3.07 3.07 0 1 0 15.79 33.7 H6.6 V24.24 A3.07 3.07 0 1 0 6.6 19.82 Z" fill="none" stroke="#54545c" stroke-width="2.256" stroke-linejoin="round"/></svg>
<div id="r1_name" class="t" style="left:281.46px;top:584px;font-size:19.444px;color:#2a2a2a;font-weight:400;letter-spacing:0.05px;">SeqAnlyRep-Date_TimeStamp</div>
<div id="r1_esig" class="t" style="left:693.93px;top:584px;font-size:19.444px;color:#2a2a2a;font-weight:400;letter-spacing:0.1px;">-</div>
<div class="b" style="left:916.50px;top:576.45px;width:77.90px;height:30.40px;background:#198a0e;border-radius:16px;"></div>
<div id="r1_badge" class="t" style="left:926.70px;top:584px;font-size:16.667px;color:#fff;font-weight:400;">Shared</div>
<div id="r1_app" class="t" style="left:1115.92px;top:584px;font-size:19.444px;color:#2a2a2a;font-weight:400;letter-spacing:0.1px;">Seq ID</div>
<div id="r1_cby" class="t" style="left:1343.95px;top:584px;font-size:19.444px;color:#2a2a2a;font-weight:400;letter-spacing:0.1px;">Jane Smith</div>
<div id="r1_con" class="t" style="left:1532.53px;top:584px;font-size:19.444px;color:#2a2a2a;font-weight:400;letter-spacing:0.25px;">2022-12-1 04:56</div>
<div id="r1_uon" class="t" style="left:1754.30px;top:584px;font-size:19.444px;color:#2a2a2a;font-weight:400;letter-spacing:0.25px;">2022-12-1 04:56</div>
<div class="b" style="left:150.00px;top:673.00px;width:1805.00px;height:2.00px;background:linear-gradient(#ececec 50%, #d9d9d9 50%);"></div>
<div class="b" style="left:175.04px;top:633.31px;width:27.86px;height:27.90px;border:2px solid #d0d0d0;background:#fff;"></div>
<svg class="b" style="left:246.39px;top:633.63px" width="28" height="28" viewBox="0 0 42.105 42.105"><path d="M6.6 10.7 H15.17 A3.07 3.07 0 1 1 20.83 10.7 H29.6 V19.14 A3.07 3.07 0 1 1 29.6 24.92 V33.7 H20.21 A3.07 3.07 0 1 0 15.79 33.7 H6.6 V24.24 A3.07 3.07 0 1 0 6.6 19.82 Z" fill="none" stroke="#54545c" stroke-width="2.256" stroke-linejoin="round"/></svg>
<div id="r2_name" class="t" style="left:281.33px;top:640px;font-size:19.444px;color:#2a2a2a;font-weight:400;letter-spacing:0.05px;">QCSumRep-Date_TimeStamp</div>
<div id="r2_esig" class="t" style="left:693.15px;top:640px;font-size:19.444px;color:#2a2a2a;font-weight:400;letter-spacing:0.1px;">Pending (1 / 2)</div>
<div class="b" style="left:916.50px;top:632.01px;width:77.90px;height:30.40px;background:#198a0e;border-radius:16px;"></div>
<div id="r2_badge" class="t" style="left:926.70px;top:640px;font-size:16.667px;color:#fff;font-weight:400;">Shared</div>
<div id="r2_app" class="t" style="left:1115.92px;top:640px;font-size:19.444px;color:#2a2a2a;font-weight:400;letter-spacing:0.1px;">Seq A</div>
<div id="r2_cby" class="t" style="left:1343.95px;top:640px;font-size:19.444px;color:#2a2a2a;font-weight:400;letter-spacing:0.1px;">Jane Smith</div>
<div id="r2_con" class="t" style="left:1532.53px;top:640px;font-size:19.444px;color:#2a2a2a;font-weight:400;letter-spacing:0.25px;">2022-12-1 04:56</div>
<div id="r2_uon" class="t" style="left:1754.30px;top:640px;font-size:19.444px;color:#2a2a2a;font-weight:400;letter-spacing:0.25px;">2022-12-1 04:56</div>
<div class="b" style="left:150.00px;top:728.00px;width:1805.00px;height:2.00px;background:linear-gradient(#ececec 50%, #d9d9d9 50%);"></div>
<div class="b" style="left:175.04px;top:688.86px;width:27.86px;height:27.90px;border:2px solid #d0d0d0;background:#fff;"></div>
<svg class="b" style="left:246.39px;top:689.18px" width="28" height="28" viewBox="0 0 42.105 42.105"><path d="M6.6 10.7 H15.17 A3.07 3.07 0 1 1 20.83 10.7 H29.6 V19.14 A3.07 3.07 0 1 1 29.6 24.92 V33.7 H20.21 A3.07 3.07 0 1 0 15.79 33.7 H6.6 V24.24 A3.07 3.07 0 1 0 6.6 19.82 Z" fill="none" stroke="#54545c" stroke-width="2.256" stroke-linejoin="round"/></svg>
<div id="r3_name" class="t" style="left:281.33px;top:695px;font-size:19.444px;color:#2a2a2a;font-weight:400;letter-spacing:0.05px;">QCSumRep-Date_TimeStamp</div>
<div id="r3_esig" class="t" style="left:693.15px;top:695px;font-size:19.444px;color:#2a2a2a;font-weight:400;letter-spacing:0.1px;">Pending (1 / 2)</div>
<div class="b" style="left:916.50px;top:687.56px;width:77.90px;height:30.40px;background:#198a0e;border-radius:16px;"></div>
<div id="r3_badge" class="t" style="left:926.70px;top:695px;font-size:16.667px;color:#fff;font-weight:400;">Shared</div>
<div id="r3_app" class="t" style="left:1115.92px;top:695px;font-size:19.444px;color:#2a2a2a;font-weight:400;letter-spacing:0.1px;">Seq A</div>
<div id="r3_cby" class="t" style="left:1343.95px;top:695px;font-size:19.444px;color:#2a2a2a;font-weight:400;letter-spacing:0.1px;">Jane Smith</div>
<div id="r3_con" class="t" style="left:1532.53px;top:695px;font-size:19.444px;color:#2a2a2a;font-weight:400;letter-spacing:0.25px;">2022-12-1 04:56</div>
<div id="r3_uon" class="t" style="left:1754.30px;top:695px;font-size:19.444px;color:#2a2a2a;font-weight:400;letter-spacing:0.25px;">2022-12-1 04:56</div>
<div class="b" style="left:150.00px;top:784.00px;width:1805.00px;height:2.00px;background:linear-gradient(#ececec 50%, #d9d9d9 50%);"></div>
<div class="b" style="left:175.04px;top:744.42px;width:27.86px;height:27.90px;border:2px solid #d0d0d0;background:#fff;"></div>
<svg class="b" style="left:246.39px;top:744.74px" width="28" height="28" viewBox="0 0 42.105 42.105"><path d="M6.6 10.7 H15.17 A3.07 3.07 0 1 1 20.83 10.7 H29.6 V19.14 A3.07 3.07 0 1 1 29.6 24.92 V33.7 H20.21 A3.07 3.07 0 1 0 15.79 33.7 H6.6 V24.24 A3.07 3.07 0 1 0 6.6 19.82 Z" fill="none" stroke="#54545c" stroke-width="2.256" stroke-linejoin="round"/></svg>
<div id="r4_name" class="t" style="left:282.44px;top:751px;font-size:19.444px;color:#2a2a2a;font-weight:400;letter-spacing:0.05px;">AnalysisSumReport-Date_TimeStamp</div>
<div id="r4_esig" class="t" style="left:693.46px;top:751px;font-size:19.444px;color:#2a2a2a;font-weight:400;letter-spacing:0.1px;">Signed</div>
<div class="b" style="left:916.50px;top:743.12px;width:77.90px;height:30.40px;background:#198a0e;border-radius:16px;"></div>
<div id="r4_badge" class="t" style="left:926.70px;top:751px;font-size:16.667px;color:#fff;font-weight:400;">Shared</div>
<div id="r4_app" class="t" style="left:1115.92px;top:751px;font-size:19.444px;color:#2a2a2a;font-weight:400;letter-spacing:0.1px;">Seq ID</div>
<div id="r4_cby" class="t" style="left:1343.95px;top:751px;font-size:19.444px;color:#2a2a2a;font-weight:400;letter-spacing:0.1px;">Jane Smith</div>
<div id="r4_con" class="t" style="left:1532.53px;top:751px;font-size:19.444px;color:#2a2a2a;font-weight:400;letter-spacing:0.25px;">2022-12-1 04:56</div>
<div id="r4_uon" class="t" style="left:1754.30px;top:751px;font-size:19.444px;color:#2a2a2a;font-weight:400;letter-spacing:0.25px;">2022-12-1 04:56</div>
<div class="b" style="left:150.00px;top:839.00px;width:1805.00px;height:2.00px;background:linear-gradient(#ececec 50%, #d9d9d9 50%);"></div>
<div class="b" style="left:175.04px;top:799.97px;width:27.86px;height:27.90px;border:2px solid #d0d0d0;background:#fff;"></div>
<svg class="b" style="left:246.39px;top:800.29px" width="28" height="28" viewBox="0 0 42.105 42.105"><path d="M6.6 10.7 H15.17 A3.07 3.07 0 1 1 20.83 10.7 H29.6 V19.14 A3.07 3.07 0 1 1 29.6 24.92 V33.7 H20.21 A3.07 3.07 0 1 0 15.79 33.7 H6.6 V24.24 A3.07 3.07 0 1 0 6.6 19.82 Z" fill="none" stroke="#54545c" stroke-width="2.256" stroke-linejoin="round"/></svg>
<div id="r5_name" class="t" style="left:282.44px;top:807px;font-size:19.444px;color:#2a2a2a;font-weight:400;letter-spacing:0.05px;">AnalysisSumReport-Date_TimeStamp</div>
<div id="r5_esig" class="t" style="left:693.46px;top:807px;font-size:19.444px;color:#2a2a2a;font-weight:400;letter-spacing:0.1px;">Signed</div>
<div class="b" style="left:916.50px;top:798.67px;width:77.90px;height:30.40px;background:#198a0e;border-radius:16px;"></div>
<div id="r5_badge" class="t" style="left:926.70px;top:806px;font-size:16.667px;color:#fff;font-weight:400;">Shared</div>
<div id="r5_app" class="t" style="left:1115.92px;top:807px;font-size:19.444px;color:#2a2a2a;font-weight:400;letter-spacing:0.1px;">Seq ID</div>
<div id="r5_cby" class="t" style="left:1343.95px;top:807px;font-size:19.444px;color:#2a2a2a;font-weight:400;letter-spacing:0.1px;">Jane Smith</div>
<div id="r5_con" class="t" style="left:1532.53px;top:807px;font-size:19.444px;color:#2a2a2a;font-weight:400;letter-spacing:0.25px;">2022-12-1 04:56</div>
<div id="r5_uon" class="t" style="left:1754.30px;top:807px;font-size:19.444px;color:#2a2a2a;font-weight:400;letter-spacing:0.25px;">2022-12-1 04:56</div>
<div class="b" style="left:150.00px;top:895.00px;width:1805.00px;height:2.00px;background:linear-gradient(#ececec 50%, #d9d9d9 50%);"></div>
<div class="b" style="left:175.04px;top:855.53px;width:27.86px;height:27.90px;border:2px solid #d0d0d0;background:#fff;"></div>
<svg class="b" style="left:246.39px;top:855.85px" width="28" height="28" viewBox="0 0 42.105 42.105"><path d="M6.6 10.7 H15.17 A3.07 3.07 0 1 1 20.83 10.7 H29.6 V19.14 A3.07 3.07 0 1 1 29.6 24.92 V33.7 H20.21 A3.07 3.07 0 1 0 15.79 33.7 H6.6 V24.24 A3.07 3.07 0 1 0 6.6 19.82 Z" fill="none" stroke="#54545c" stroke-width="2.256" stroke-linejoin="round"/></svg>
<div id="r6_name" class="t" style="left:282.44px;top:862px;font-size:19.444px;color:#2a2a2a;font-weight:400;letter-spacing:0.05px;">AnalysisSumReport-Date_TimeStamp</div>
<div id="r6_esig" class="t" style="left:693.46px;top:862px;font-size:19.444px;color:#2a2a2a;font-weight:400;letter-spacing:0.1px;">Signed</div>
<div class="b" style="left:916.50px;top:854.23px;width:77.90px;height:30.40px;background:#198a0e;border-radius:16px;"></div>
<div id="r6_badge" class="t" style="left:926.70px;top:862px;font-size:16.667px;color:#fff;font-weight:400;">Shared</div>
<div id="r6_app" class="t" style="left:1115.92px;top:862px;font-size:19.444px;color:#2a2a2a;font-weight:400;letter-spacing:0.1px;">Seq ID</div>
<div id="r6_cby" class="t" style="left:1343.95px;top:862px;font-size:19.444px;color:#2a2a2a;font-weight:400;letter-spacing:0.1px;">Jane Smith</div>
<div id="r6_con" class="t" style="left:1532.53px;top:862px;font-size:19.444px;color:#2a2a2a;font-weight:400;letter-spacing:0.25px;">2022-12-1 04:56</div>
<div id="r6_uon" class="t" style="left:1754.30px;top:862px;font-size:19.444px;color:#2a2a2a;font-weight:400;letter-spacing:0.25px;">2022-12-1 04:56</div>
<div class="b" style="left:150.00px;top:950.00px;width:1805.00px;height:2.00px;background:linear-gradient(#ececec 50%, #d9d9d9 50%);"></div>
<div class="b" style="left:175.04px;top:911.08px;width:27.86px;height:27.90px;border:2px solid #d0d0d0;background:#fff;"></div>
<svg class="b" style="left:246.39px;top:911.40px" width="28" height="28" viewBox="0 0 42.105 42.105"><path d="M6.6 10.7 H15.17 A3.07 3.07 0 1 1 20.83 10.7 H29.6 V19.14 A3.07 3.07 0 1 1 29.6 24.92 V33.7 H20.21 A3.07 3.07 0 1 0 15.79 33.7 H6.6 V24.24 A3.07 3.07 0 1 0 6.6 19.82 Z" fill="none" stroke="#54545c" stroke-width="2.256" stroke-linejoin="round"/></svg>
<div id="r7_name" class="t" style="left:282.44px;top:918px;font-size:19.444px;color:#2a2a2a;font-weight:400;letter-spacing:0.05px;">AnalysisSumReport-Date_TimeStamp</div>
<div id="r7_esig" class="t" style="left:693.46px;top:918px;font-size:19.444px;color:#2a2a2a;font-weight:400;letter-spacing:0.1px;">Signed</div>
<div class="b" style="left:916.50px;top:909.78px;width:77.90px;height:30.40px;background:#198a0e;border-radius:16px;"></div>
<div id="r7_badge" class="t" style="left:926.70px;top:918px;font-size:16.667px;color:#fff;font-weight:400;">Shared</div>
<div id="r7_app" class="t" style="left:1115.92px;top:918px;font-size:19.444px;color:#2a2a2a;font-weight:400;letter-spacing:0.1px;">Seq ID</div>
<div id="r7_cby" class="t" style="left:1343.95px;top:918px;font-size:19.444px;color:#2a2a2a;font-weight:400;letter-spacing:0.1px;">Jane Smith</div>
<div id="r7_con" class="t" style="left:1532.53px;top:918px;font-size:19.444px;color:#2a2a2a;font-weight:400;letter-spacing:0.25px;">2022-12-1 04:56</div>
<div id="r7_uon" class="t" style="left:1754.30px;top:918px;font-size:19.444px;color:#2a2a2a;font-weight:400;letter-spacing:0.25px;">2022-12-1 04:56</div>
</body></html>
